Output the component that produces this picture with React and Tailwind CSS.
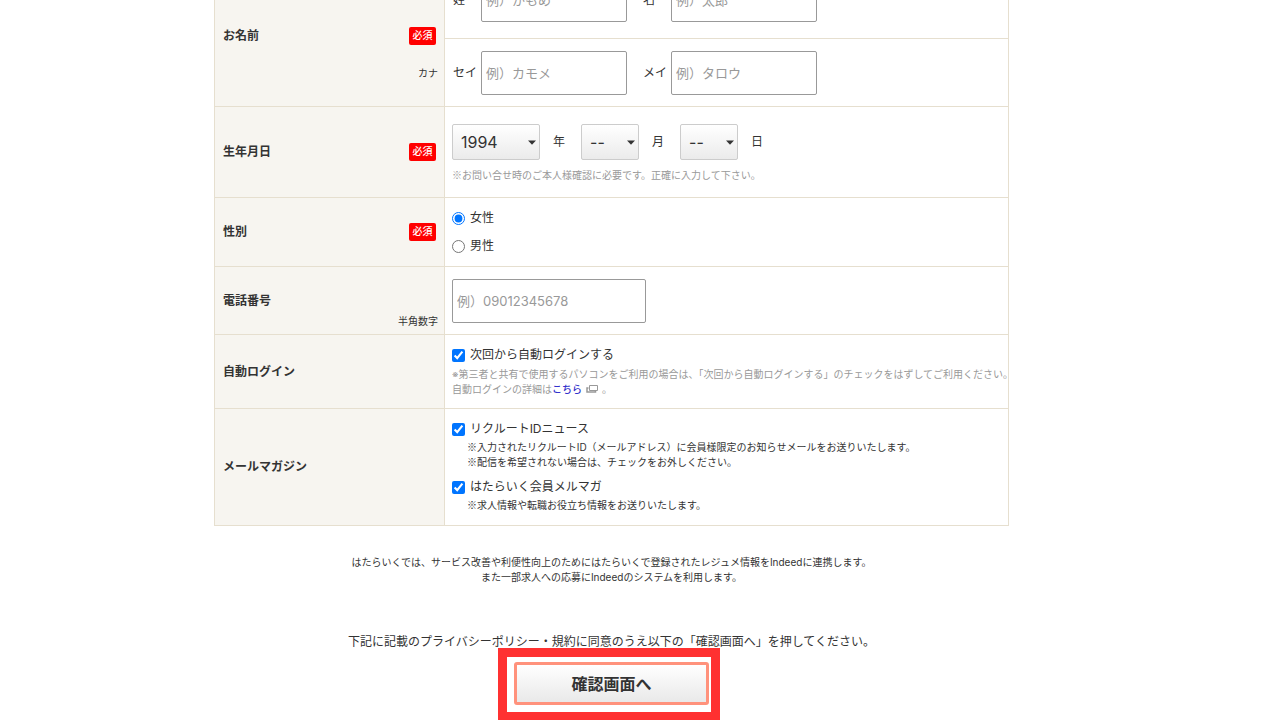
import { useState } from 'react';

const inputClass = 'h-11 rounded-[2px] border border-[#999] bg-white px-1 text-[13px] text-[#333] placeholder:text-[#999]';
const noteClass = 'text-[10px] leading-[15px] whitespace-nowrap';

function Required() {
  return (
    <span className="mr-[2px] flex h-[18px] w-[27px] items-center justify-center rounded-[2px] bg-[#ff0000] text-[10px] font-medium text-white">
      必須
    </span>
  );
}

// Inter has its own narrow reference mark, so take it from the CJK font
function Mark() {
  return <span className="font-['Noto_Sans_CJK_JP',sans-serif] leading-none">※</span>;
}

function HeadCell({ title, required, sub, className = 'align-middle', rowSpan }) {
  return (
    <th scope="row" rowSpan={rowSpan} className={`border border-[#e6dfcf] bg-[#f7f5f0] pr-1.5 pl-2 text-left ${className}`}>
      <div className="flex h-[18px] items-center justify-between text-xs font-bold">
        <span>{title}</span>
        {required && <Required />}
      </div>
      {sub}
    </th>
  );
}

function NameField({ id, label, placeholder }) {
  return (
    <div className="flex items-center">
      <label htmlFor={id} className="w-7">{label}</label>
      <input type="text" id={id} placeholder={placeholder} className={`w-[146px] ${inputClass}`} />
    </div>
  );
}

function DateSelect({ id, unit, options, width }) {
  return (
    <div className="flex items-center">
      <div className={`relative ${width}`}>
        <select
          id={id}
          defaultValue={options[0]}
          className="block h-9 w-full appearance-none rounded-[2px] border border-[#ccc] bg-linear-to-b from-white to-[#ebebeb] pl-2 text-base text-[#333]"
        >
          {options.map((o) => <option key={o}>{o}</option>)}
        </select>
        <svg className="pointer-events-none absolute top-4 right-1 h-[5px] w-2" viewBox="0 0 8 5" fill="#333">
          <path d="M0 .5h8L4 4.8z" />
        </svg>
      </div>
      <label htmlFor={id} className="mr-4 ml-[13px]">{unit}</label>
    </div>
  );
}

function Check({ type = 'checkbox', name, label, checked, onChange }) {
  return (
    <label className="flex h-[18px] items-center gap-[5px]">
      <input type={type} name={name} checked={checked} onChange={onChange} className="m-0 h-[13px] w-[13px]" />
      {label}
    </label>
  );
}

export default function App() {
  const [gender, setGender] = useState('female');
  const [checks, setChecks] = useState({ autoLogin: true, news: true, magazine: true });

  const toggle = (key) => {
    setChecks((prev) => ({ ...prev, [key]: !prev[key] }));
  };

  return (
    <div className="min-h-screen overflow-hidden bg-white pr-[57px] font-['Inter','Noto_Sans_CJK_JP',sans-serif] text-xs text-[#333]">
      <form className="mx-auto -mt-[30px] max-w-[795px]" onSubmit={(e) => e.preventDefault()}>
        <table className="w-full table-fixed border-collapse border border-[#e6dfcf]">
          <colgroup>
            <col className="w-[230px]" />
            <col />
          </colgroup>
          <tbody>
            <tr className="h-[68px]">
              <HeadCell
                title="お名前"
                required
                rowSpan={2}
                className="pb-[26px] align-bottom"
                sub={<p className="mt-[21px] text-right text-[10px] leading-[14px] font-normal">カナ</p>}
              />
              <td className="border border-[#e6dfcf] px-2 pb-4 align-bottom">
                <div className="flex gap-4">
                  <NameField id="sei" label="姓" placeholder="例）かもめ" />
                  <NameField id="mei" label="名" placeholder="例）太郎" />
                </div>
              </td>
            </tr>
            <tr className="h-[68px]">
              <td className="border border-[#e6dfcf] px-2">
                <div className="flex gap-4">
                  <NameField id="seiKana" label="セイ" placeholder="例）カモメ" />
                  <NameField id="meiKana" label="メイ" placeholder="例）タロウ" />
                </div>
              </td>
            </tr>
            <tr className="h-[91px]">
              <HeadCell title="生年月日" required />
              <td className="border border-[#e6dfcf] px-[7px] pt-[17px] align-top">
                <div className="flex">
                  <DateSelect id="year" unit="年" options={['1994', '1995', '1996']} width="w-[88px]" />
                  <DateSelect id="month" unit="月" options={['--', '1', '2', '3']} width="w-[58px]" />
                  <DateSelect id="day" unit="日" options={['--', '1', '2', '3']} width="w-[58px]" />
                </div>
                <p className={`mt-2 text-[#999] ${noteClass}`}><Mark />お問い合せ時のご本人様確認に必要です。正確に入力して下さい。</p>
              </td>
            </tr>
            <tr className="h-[69px]">
              <HeadCell title="性別" required />
              <td className="border border-[#e6dfcf] px-[7px] pt-[11px] align-top">
                <div className="flex flex-col gap-2.5">
                  <Check type="radio" name="gender" label="女性" checked={gender === 'female'} onChange={() => setGender('female')} />
                  <Check type="radio" name="gender" label="男性" checked={gender === 'male'} onChange={() => setGender('male')} />
                </div>
              </td>
            </tr>
            <tr className="h-[68px]">
              <HeadCell
                title={<label htmlFor="tel">電話番号</label>}
                className="pb-1.5 align-bottom"
                sub={<p className="mt-1 text-right text-[10px] leading-[14px] font-normal">半角数字</p>}
              />
              <td className="border border-[#e6dfcf] px-[7px]">
                <input type="tel" id="tel" placeholder="例）09012345678" className={`block w-[194px] ${inputClass}`} />
              </td>
            </tr>
            <tr className="h-[74px]">
              <HeadCell title="自動ログイン" />
              <td className="border border-[#e6dfcf] pt-[11px] pl-[7px] align-top">
                <Check name="autoLogin" label="次回から自動ログインする" checked={checks.autoLogin} onChange={() => toggle('autoLogin')} />
                <p className={`mt-[3px] text-[#999] ${noteClass}`}>
                  ※第三者と共有で使用するパソコンをご利用の場合は、「次回から自動ログインする」のチェックをはずしてご利用ください。
                  <br />
                  自動ログインの詳細は<a href="#detail" className="font-medium text-[#3333cc]">こちら</a>
                  <svg className="mx-1 inline-block h-2 w-3 align-baseline" viewBox="0 0 12 8" fill="none" stroke="#999">
                    <path d="M3.5.5h8v5h-8z" />
                    <path d="M2.500 3H1v4h8.500V6" strokeWidth="1.500" />
                  </svg>
                  。
                </p>
              </td>
            </tr>
            <tr className="h-[117px]">
              <HeadCell title="メールマガジン" />
              <td className="border border-[#e6dfcf] px-[7px] pt-[11px] align-top">
                <Check name="news" label="リクルートIDニュース" checked={checks.news} onChange={() => toggle('news')} />
                <p className={`mt-[2px] ml-[15px] ${noteClass}`}>
                  <Mark />入力されたリクルートID（メールアドレス）に会員様限定のお知らせメールをお送りいたします。
                  <br />
                  <Mark />配信を希望されない場合は、チェックをお外しください。
                </p>
                <div className="mt-2">
                  <Check name="magazine" label="はたらいく会員メルマガ" checked={checks.magazine} onChange={() => toggle('magazine')} />
                </div>
                <p className={`mt-[2px] ml-[15px] ${noteClass}`}><Mark />求人情報や転職お役立ち情報をお送りいたします。</p>
              </td>
            </tr>
          </tbody>
        </table>

        <p className={`mt-[29px] text-center ${noteClass}`}>
          はたらいくでは、サービス改善や利便性向上のためにはたらいくで登録されたレジュメ情報をIndeedに連携します。
          <br />
          また一部求人への応募にIndeedのシステムを利用します。
        </p>

        <p className="mt-[50px] text-center leading-[14px]">
          下記に記載のプライバシーポリシー・規約に同意のうえ以下の「確認画面へ」を押してください。
        </p>

        <div className="relative mx-auto mt-[13px] mb-4 w-[195px]">
          <button
            type="submit"
            className="block h-[43px] w-full rounded-[3px] border-3 border-[#ff927c] bg-linear-to-b from-white to-[#e9e9e9] text-base font-bold text-[#333]"
          >
            確認画面へ
          </button>
          {/* highlight frame around the button */}
          <div className="pointer-events-none absolute -top-[14px] -right-[11px] -bottom-4 -left-4 border-[9px] border-[#ff3131]" />
        </div>
      </form>
    </div>
  );
}
